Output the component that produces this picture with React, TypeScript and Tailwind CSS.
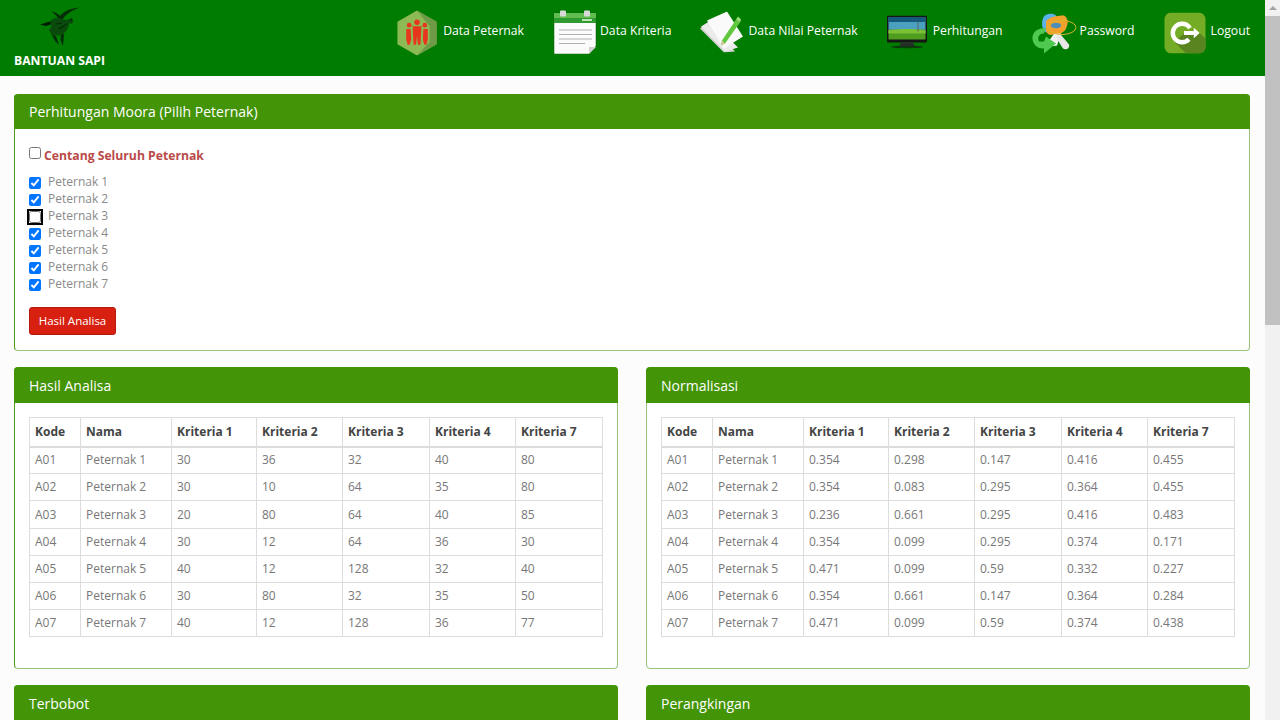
import React from "react";

const font = { fontFamily: '"Open Sans", "Noto Sans", sans-serif' };

const GoatIcon = () => (
  <svg width="50" height="46" viewBox="0 0 50 46" fill="none">
    <path d="M22 15 C25 9 33 4 44 3.500 C36 6 30 10 26 16 Z" fill="#062b08" />
    <path d="M15 7 C19 8 23 10 25 13 L22 14 C20 11 18 9 15 7 Z" fill="#062b08" />
    <path d="M4 20.500 L14 17.500 L16 20 L10 22 Z" fill="#031a05" />
    <path d="M14 18 C16 15 19 13 23 14 L30 16 L34 15 L37 19 C36 20 34 20 33 19 C33 24 30 28 26 31 C22 32 17 31 14 28 L13 25 C16 24 16 21 14 18 Z" fill="#0a4a0c" />
    <path d="M14 26 C15 29 17 31 20 32 L23 41 L19 37 L16 31 Z" fill="#062b08" />
    <path d="M25 31 L28 30 L27 42 L24.500 36 Z" fill="#062b08" />
    <path d="M20 20 L26 19 M23 25 L31 20" stroke="#062b08" strokeWidth="1.200" />
    <path d="M33 16 L36 14 L37 18 Z" fill="#062b08" />
  </svg>
);

const PeopleIcon = () => (
  <svg width="40" height="45" viewBox="0 0 40 46">
    <path d="M20 0 L40 11.500 V34.500 L20 46 L0 34.500 V11.500 Z" fill="#8dba55" />
    <path d="M20 0 L40 11.500 V34.500 L20 46 L33 32 V16 Z" fill="#6f9a48" />
    <g fill="#e8351d">
      <circle cx="20" cy="12" r="2.800" />
      <circle cx="12" cy="15" r="2.400" />
      <circle cx="28" cy="15" r="2.400" />
      <path d="M15.500 16 H24.500 L23.500 35 H21 L20 26 L19 35 H16.500 Z" />
      <path d="M9 19 H13.500 L14 30 L12.500 35 H10.500 L9 30 Z" />
      <path d="M26.500 19 H31 L31 30 L29.500 35 H27.500 L26 30 Z" />
    </g>
  </svg>
);

const CalendarIcon = () => (
  <svg width="44" height="44" viewBox="0 0 44 44">
    <path d="M1 3 H43 V36 L36 44 H1 Z" fill="#fbfbfb" stroke="#0b5a0b" strokeWidth="0.500" />
    <path d="M1 3 H43 V13 H1 Z" fill="#2f9a2f" />
    <path d="M1 3 H43 V8 H1 Z" fill="#60bd50" />
    <rect x="7" y="0.500" width="6" height="6" rx="1" fill="#d9d9d9" />
    <rect x="31" y="0.500" width="6" height="6" rx="1" fill="#d9d9d9" />
    <rect x="29" y="9" width="10" height="2" fill="#bfe3b5" />
    <path d="M6 20 H39 M6 24.500 H39 M6 29 H39 M6 33.500 H32" stroke="#b0b0b0" strokeWidth="1.200" />
    <path d="M36 44 L36 37 H43 Z" fill="#cfcfcf" />
  </svg>
);

const NotesIcon = () => (
  <svg width="44" height="41" viewBox="0 0 44 41">
    <path d="M0 17 L9 10 L35 40 L24 41 Z" fill="#d4d4d4" />
    <path d="M1 15 L11 9 L38 36 L25 40 Z" fill="#ebebeb" />
    <path d="M7 9 L27 0 L43 25 L24 37 Z" fill="#fafafa" />
    <path d="M22 29 L36 8 L40 11 L25 32 L21 34 Z" fill="#62c63f" />
    <path d="M36 8 L38 5 L41 8 L40 11 Z" fill="#9be07a" />
    <path d="M21 34 L22 29 L25 32 Z" fill="#d8c79a" />
  </svg>
);

const MonitorIcon = () => (
  <svg width="40" height="33" viewBox="0 0 40 33">
    <rect x="0" y="0" width="40" height="27" rx="1" fill="#161616" />
    <rect x="1.500" y="1.500" width="37" height="16" fill="#4b9fbf" />
    <rect x="1.500" y="1.500" width="37" height="5" fill="#155a7a" />
    <rect x="1.500" y="14" width="37" height="10" fill="#4f9d1f" />
    <path d="M1.500 15 C12 13 28 13 38.500 15 V18 H1.500 Z" fill="#7bbf35" />
    <path d="M31 6 V16" stroke="#555" strokeWidth="0.800" />
    <path d="M14 27 H26 L28 31 H12 Z" fill="#2c2c2c" />
    <ellipse cx="20" cy="31.500" rx="16" ry="1.500" fill="#0a3b0a" />
  </svg>
);

const KeyIcon = () => (
  <svg width="46" height="41" viewBox="0 0 46 41">
    <path d="M12 6 C13 1 22 0 25 3 L28 14 L15 20 C11 16 10 11 12 6 Z" fill="#5bb2e6" />
    <path d="M17 30 L25 18 L30 21 L26 33 C23 34 19 33 17 30 Z" fill="#f1f1f1" />
    <path d="M28 20 L38 32 C39 36 35 38 32 36 L25 25 Z" fill="#e7e7e7" />
    <path d="M15 9 C17 5 25 3 33 3 C36 5 38 9 36 13 C35 19 30 22 25 21 C19 24 15 22 15 16 Z" fill="#f0a22c" />
    <ellipse cx="25" cy="13" rx="5" ry="2.800" fill="#4d8fb4" />
    <ellipse cx="31" cy="15" rx="14" ry="7" fill="none" stroke="#d8b530" strokeWidth="1" />
    <path d="M3 31 C-2 22 6 14 15 16 L13 21 C8 21 6 25 8 29 L13 29 L15 24 L25 31 L13 41 L13 36 C9 36 5 35 3 31 Z" fill="#4fc94f" />
  </svg>
);

const LogoutIcon = () => (
  <svg width="42" height="41" viewBox="0 0 42 42">
    <rect x="0" y="0" width="42" height="42" rx="7" fill="#74ad25" />
    <path d="M21 21 L36 21 L42 27 V35 C42 39 39 42 35 42 H22 L10 30 Z" fill="#5a8420" />
    <circle cx="18" cy="21" r="9.500" fill="none" stroke="#fff" strokeWidth="4.500" strokeDasharray="47 13" strokeDashoffset="-7" />
    <path d="M20 19 H30 V15.500 L36 21 L30 26.500 V23 H20 Z" fill="#fff" />
  </svg>
);

const nav = [
  { label: "Data Peternak", icon: <PeopleIcon />, cls: "w-[40px] translate-y-[1.5px]", gap: "gap-[6px]", next: "mr-[29px]" },
  { label: "Data Kriteria", icon: <CalendarIcon />, cls: "w-[44px] translate-y-[1px]", gap: "gap-[3px]", next: "mr-[29px]" },
  { label: "Data Nilai Peternak", icon: <NotesIcon />, cls: "w-[44px] translate-y-[0.5px]", gap: "gap-[4px]", next: "mr-[29px]" },
  { label: "Perhitungan", icon: <MonitorIcon />, cls: "w-[40px] translate-y-[0.5px]", gap: "gap-[6px]", next: "mr-[28px]" },
  { label: "Password", icon: <KeyIcon />, cls: "w-[46px] translate-y-[1.5px]", gap: "gap-[3px]", next: "mr-[29px]" },
  { label: "Logout", icon: <LogoutIcon />, cls: "w-[42px] translate-y-[1.5px]", gap: "gap-[5px]", next: "" },
];

const Panel = ({
  title,
  children,
  className = "",
  tall = false,
}: {
  title: string;
  children?: React.ReactNode;
  className?: string;
  tall?: boolean;
}) => (
  <section className={`rounded-[4px] border border-[#99c47f] bg-white ${className}`}>
    <h2
      className={`-mx-px -mt-px rounded-t-[4px] bg-[#439406] px-[15px] text-[14px] font-normal text-white ${
        tall ? "h-[36px] leading-[37px]" : "h-[35px] leading-[35px]"
      }`}
    >
      {title}
    </h2>
    {children}
  </section>
);

const rowsA = [
  ["A01", "Peternak 1", "30", "36", "32", "40", "80"],
  ["A02", "Peternak 2", "30", "10", "64", "35", "80"],
  ["A03", "Peternak 3", "20", "80", "64", "40", "85"],
  ["A04", "Peternak 4", "30", "12", "64", "36", "30"],
  ["A05", "Peternak 5", "40", "12", "128", "32", "40"],
  ["A06", "Peternak 6", "30", "80", "32", "35", "50"],
  ["A07", "Peternak 7", "40", "12", "128", "36", "77"],
];
const rowsB = [
  ["A01", "Peternak 1", "0.354", "0.298", "0.147", "0.416", "0.455"],
  ["A02", "Peternak 2", "0.354", "0.083", "0.295", "0.364", "0.455"],
  ["A03", "Peternak 3", "0.236", "0.661", "0.295", "0.416", "0.483"],
  ["A04", "Peternak 4", "0.354", "0.099", "0.295", "0.374", "0.171"],
  ["A05", "Peternak 5", "0.471", "0.099", "0.59", "0.332", "0.227"],
  ["A06", "Peternak 6", "0.354", "0.661", "0.147", "0.364", "0.284"],
  ["A07", "Peternak 7", "0.471", "0.099", "0.59", "0.374", "0.438"],
];
const heads = ["Kode", "Nama", "Kriteria 1", "Kriteria 2", "Kriteria 3", "Kriteria 4", "Kriteria 7"];
const colW = ["w-[51px]", "w-[91px]", "w-[85px]", "w-[86px]", "w-[87px]", "w-[86px]", "w-[87px]"];

const DataTable = ({ rows }: { rows: string[][] }) => (
  <table className="w-[574px] table-fixed border-collapse border border-[#dddddd] text-[12px]">
    <thead>
      <tr className="h-[29px]">
        {heads.map((h, i) => (
          <th key={h} className={`${colW[i]} border border-b-2 border-[#dddddd] px-[5px] text-left font-bold text-[#444444]`}>
            {h}
          </th>
        ))}
      </tr>
    </thead>
    <tbody>
      {rows.map((r, ri) => (
        <tr key={r[0]} className={ri === 2 ? "h-[28px]" : "h-[27px]"}>
          {r.map((c, i) => (
            <td key={i} className="border border-[#dddddd] px-[5px] text-[#777777]">
              {c}
            </td>
          ))}
        </tr>
      ))}
    </tbody>
  </table>
);

export default function App() {
  const noop = () => {};
  return (
    <div className="flex h-[720px] w-[1280px] overflow-hidden bg-[#fcfcfc]" style={font}>
      <div className="w-[1265px] shrink-0">
        <header className="flex h-[76px] items-start justify-between bg-[#007c00] pl-[14px] pr-[15px]">
          <div className="flex w-[91px] flex-col items-center pt-[4px]">
            <div className="self-start pl-[22px]">
              <GoatIcon />
            </div>
            <div className="mt-[3px] whitespace-nowrap text-[12.2px] leading-[16px] font-bold text-white">BANTUAN SAPI</div>
          </div>
          <nav className="flex h-[62px] items-center">
            {nav.map((n) => (
              <div key={n.label} className={`flex items-center ${n.gap} ${n.next}`}>
                <div className={`flex justify-center ${n.cls}`}>{n.icon}</div>
                <span className="whitespace-nowrap text-[12.2px] text-white">{n.label}</span>
              </div>
            ))}
          </nav>
        </header>

        <main className="flex flex-col gap-[16px] pl-[14px] pr-[15px] pt-[18px]">
          <Panel title="Perhitungan Moora (Pilih Peternak)" className="h-[257px] border-l-[#4f9c14]">
            <div className="px-[14px] pt-[17px]">
              <label className="flex h-[17px] items-start gap-[3px] text-[12.2px] leading-[17px] font-bold text-[#b94a48]">
                <input type="checkbox" className="m-0 mt-[1px] size-[12px]" />
                <span className="pt-[1px]">Centang Seluruh Peternak</span>
              </label>
              <div className="mt-[11px] flex flex-col">
                {[1, 2, 3, 4, 5, 6, 7].map((n) => (
                  <label key={n} className="flex h-[17px] items-center gap-[7px] text-[12px] text-[#8a8a8a]">
                    <input
                      type="checkbox"
                      checked={n !== 3}
                      onChange={noop}
                      className={`m-0 size-[12px] shrink-0 ${n === 3 ? "outline-2 outline-offset-0 outline-black" : ""}`}
                    />
                    <span className="-translate-y-[1px]">Peternak {n}</span>
                  </label>
                ))}
              </div>
              <button className="mt-[14px] h-[28px] w-[87px] rounded-[3px] border border-[#b5190e] bg-[#d7200f] text-[11.5px] text-white">
                Hasil Analisa
              </button>
            </div>
          </Panel>

          <div className="grid grid-cols-[604px_604px] justify-between gap-y-[16px]">
            <Panel tall title="Hasil Analisa" className="h-[302px] border-l-[#4f9c14]">
              <div className="px-[14px] pt-[14px]">
                <DataTable rows={rowsA} />
              </div>
            </Panel>
            <Panel tall title="Normalisasi" className="h-[302px]">
              <div className="px-[14px] pt-[14px]">
                <DataTable rows={rowsB} />
              </div>
            </Panel>
            <Panel tall title="Terbobot" className="h-[100px] border-l-[#4f9c14]" />
            <Panel tall title="Perangkingan" className="h-[100px]" />
          </div>
        </main>
      </div>

      <div className="flex h-[720px] w-[15px] shrink-0 flex-col bg-[#f1f1f1]">
        <div className="flex h-[16px] items-center justify-center">
          <div className="size-0 border-x-[4px] border-b-[4px] border-x-transparent border-b-[#a3a3a3]" />
        </div>
        <div className="h-[309px] bg-[#c1c1c1]" />
      </div>
    </div>
  );
}
